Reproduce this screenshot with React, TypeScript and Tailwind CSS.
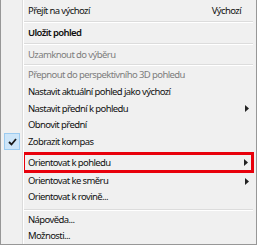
import type { ReactNode } from 'react';

function Sep() {
  return (
    <div className="ml-[22px] mr-[3px] flex flex-col">
      <div className="h-px bg-[#dcdcdc]" />
      <div className="h-px bg-white" />
    </div>
  );
}

function Arrow({ mr = 'mr-[7px]' }: { mr?: string }) {
  return (
    <svg width="4" height="7" viewBox="0 0 4 7" className={mr}>
      <path d="M0 0 L4 3.5 L0 7 Z" fill="#222" />
    </svg>
  );
}

function Row({
  h,
  children,
  right,
  disabled,
  bold,
}: {
  h: string;
  children: ReactNode;
  right?: ReactNode;
  disabled?: boolean;
  bold?: boolean;
}) {
  return (
    <div className={`flex items-center justify-between pl-[27px] ${h}`}>
      <span className={`${disabled ? 'text-[#7d7d7d]' : 'text-[#111]'} ${bold ? 'font-semibold' : ''}`}>{children}</span>
      {right}
    </div>
  );
}

export default function App() {
  return (
    <div className="h-[245px] w-[257px] overflow-hidden bg-white">
      <div
        className="relative flex h-[245px] w-[257px] flex-col border-x border-b border-[#979797] bg-[#f0f0f0] text-[9.5px] leading-none tracking-[-0.6px]"
        style={{ fontFamily: '"Noto Sans", "Open Sans", sans-serif' }}
      >
        <div className="absolute bottom-0 left-[21px] top-0 flex">
          <div className="w-px bg-[#dcdcdc]" />
          <div className="w-px bg-white" />
        </div>

        <Row h="h-[21px]" right={<span className="mr-[15px] text-[#111]">Výchozí</span>}>
          Přejít na výchozí
        </Row>
        <Sep />
        <Row h="h-[20px]" bold>
          Uložit pohled
        </Row>
        <Sep />
        <Row h="h-[19px]" disabled>
          Uzamknout do výběru
        </Row>
        <Sep />
        <Row h="h-[18px]" disabled>
          Přepnout do perspektivního 3D pohledu
        </Row>
        <Row h="h-[16px]">Nastavit aktuální pohled jako výchozí</Row>
        <Row h="h-[17px]" right={<Arrow />}>
          Nastavit přední k pohledu
        </Row>
        <Row h="h-[16px]">Obnovit přední</Row>
        <div className="relative">
          <div className="absolute left-[3px] top-0 flex h-[17px] w-[16px] items-center justify-center border border-[#9ccbf0] bg-[#cde5f8]">
            <svg width="9" height="8" viewBox="0 0 9 8">
              <path d="M1 4 L3.5 6.5 L8 1" fill="none" stroke="#1a1a1a" strokeWidth="1.8" />
            </svg>
          </div>
          <Row h="h-[17px]">Zobrazit kompas</Row>
        </div>
        <div className="mt-[2px] ml-[21px] mr-[2px] flex h-[21px] items-center justify-between border-[3px] border-[#e8000b] pl-[3px]">
          <span className="text-[#111]">Orientovat k pohledu</span>
          <Arrow mr="mr-[3px]" />
        </div>
        <Row h="h-[16px]" right={<Arrow />}>
          Orientovat ke směru
        </Row>
        <Row h="h-[16px]">Orientovat k rovině...</Row>
        <div className="h-[4px]" />
        <Sep />
        <Row h="h-[17px]">Nápověda...</Row>
        <Row h="h-[15px]">Možnosti...</Row>
      </div>
    </div>
  );
}
